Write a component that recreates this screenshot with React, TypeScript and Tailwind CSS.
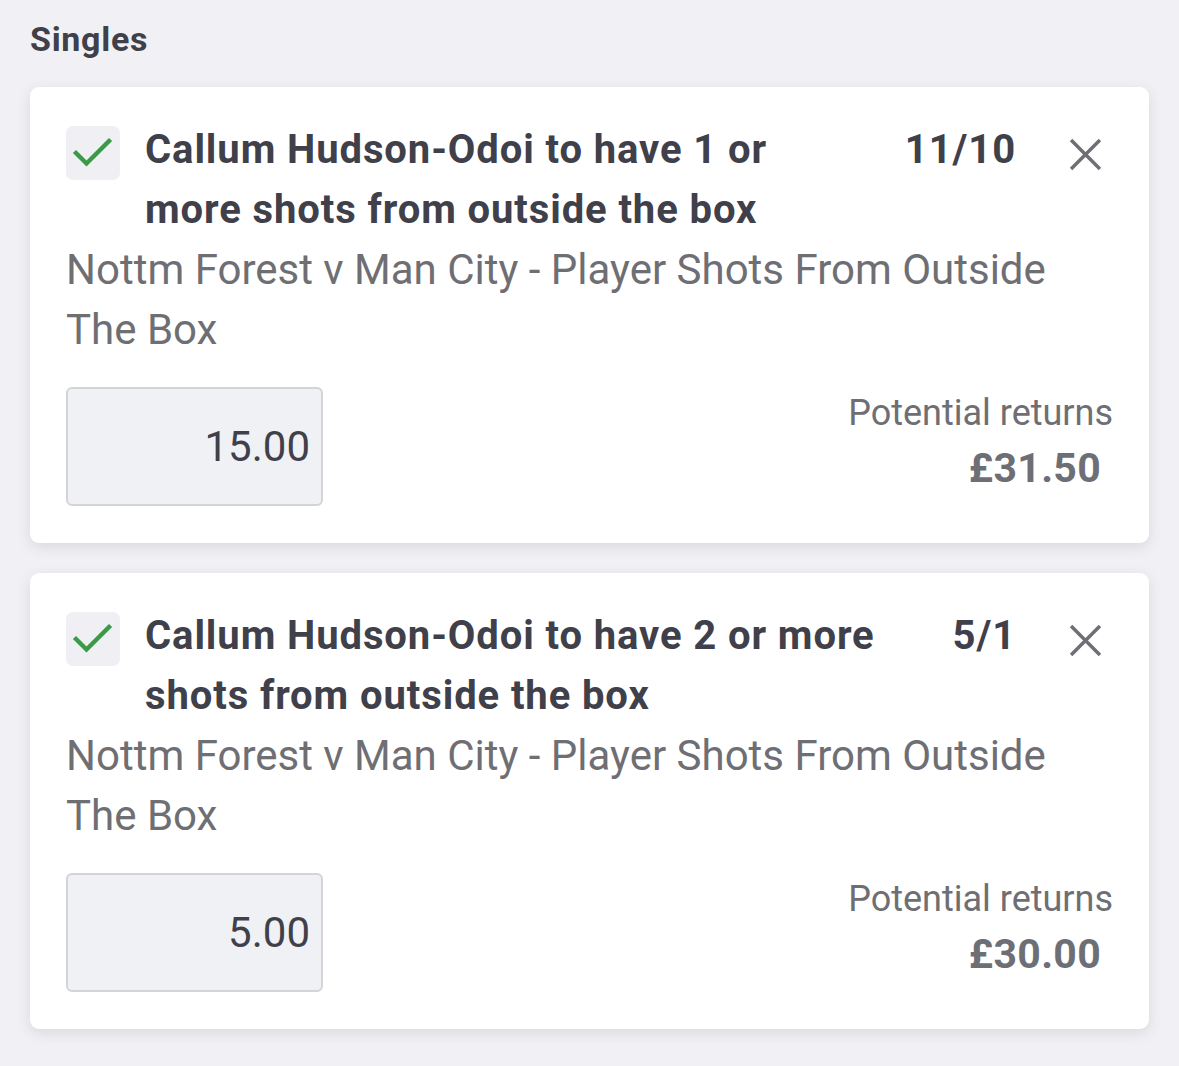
import React from "react";

type Bet = { title: string; odds: string; event: string; stake: string; returns: string };

const bets: Bet[] = [
  {
    title: "Callum Hudson-Odoi to have 1 or more shots from outside the box",
    odds: "11/10",
    event: "Nottm Forest v Man City - Player Shots From Outside The Box",
    stake: "15.00",
    returns: "£31.50",
  },
  {
    title: "Callum Hudson-Odoi to have 2 or more shots from outside the box",
    odds: "5/1",
    event: "Nottm Forest v Man City - Player Shots From Outside The Box",
    stake: "5.00",
    returns: "£30.00",
  },
];

function Check() {
  return (
    <div className="w-[54px] h-[54px] shrink-0 rounded-[7px] bg-[#f0f0f4] mt-[6px]">
      <svg width="54" height="54" viewBox="0 0 54 54" fill="none">
        <path d="M10 27L20.5 37.5L43 15" stroke="#3a9a48" strokeWidth="4.4" strokeLinecap="square" />
      </svg>
    </div>
  );
}

function Close() {
  return (
    <div className="w-[48px] h-[60px] shrink-0 flex items-center justify-center ml-[45px] mr-[4px] pt-[8px]">
      <svg width="33" height="33" viewBox="0 0 24 24" fill="none">
        <path d="M1.5 1.5L22.5 22.5M22.5 1.5L1.5 22.5" stroke="#6e6e75" strokeWidth="2.5" />
      </svg>
    </div>
  );
}

function Card({ bet }: { bet: Bet }) {
  return (
    <div className="bg-white rounded-[9px] shadow-[0_4px_14px_rgba(40,40,60,0.12)] pl-[36px] pr-[36px] pt-[33px] pb-[37px]">
      <div className="flex items-start">
        <Check />
        <div className="flex-1 ml-[25px] text-[40px] leading-[60px] font-bold tracking-[0.9px] text-[#40404a] pr-[44px]">
          {bet.title}
        </div>
        <div className="text-[40px] leading-[60px] font-bold tracking-[0.9px] text-[#40404a] shrink-0">
          {bet.odds}
        </div>
        <Close />
      </div>
      <div className="text-[42px] leading-[60px] text-[#6e6e73]">{bet.event}</div>
      <div className="flex justify-between items-start mt-[27px]">
        <div className="w-[257px] h-[119px] rounded-[6px] border-2 border-[#d4d4d8] bg-[#f0f1f5] flex items-center justify-end pr-[11px] text-[42px] text-[#40404a]">
          {bet.stake}
        </div>
        <div className="flex flex-col items-end pt-[1px]">
          <div className="text-[36px] leading-[50px] text-[#6e6e73]">Potential returns</div>
          <div className="text-[41px] leading-[60px] font-bold tracking-[0.3px] text-[#6e6e75] pr-[12px]">
            {bet.returns}
          </div>
        </div>
      </div>
    </div>
  );
}

export default function App() {
  return (
    <div
      className="w-[1179px] h-[1066px] bg-[#f1f1f5] px-[30px] pt-[14px] overflow-hidden"
      style={{ fontFamily: "Roboto, 'Noto Sans', sans-serif" }}
    >
      <div className="text-[34px] leading-[50px] font-bold tracking-[0.7px] text-[#40404a] mb-[23px]">Singles</div>
      <div className="flex flex-col gap-[30px]">
        {bets.map((b, i) => (
          <Card key={i} bet={b} />
        ))}
      </div>
    </div>
  );
}
